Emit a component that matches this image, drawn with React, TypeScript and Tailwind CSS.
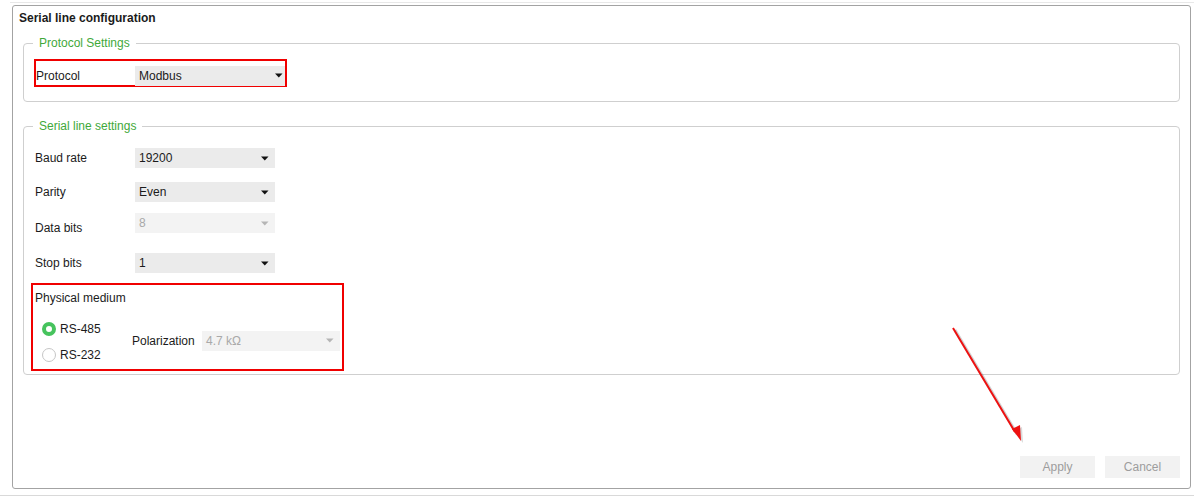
import type { ReactNode } from "react";

function Caret({ disabled }: { disabled?: boolean }) {
  return (
    <svg width="8" height="5" viewBox="0 0 8 5" className="shrink-0">
      <path d="M0 0.5 L7.5 0.5 L3.75 4.5 Z" fill={disabled ? "#b5b5b5" : "#111"} />
    </svg>
  );
}

function Select({
  value,
  width,
  disabled,
  pr = "pr-[6px]",
}: {
  value: string;
  width: string;
  disabled?: boolean;
  pr?: string;
}) {
  return (
    <div
      className={`${width} ${pr} h-[20px] pl-[4px] flex items-center justify-between ${
        disabled ? "bg-[#f3f3f3] text-[#a9a9a9]" : "bg-[#ebebeb] text-[#1b1b1b]"
      }`}
    >
      <span>{value}</span>
      <Caret disabled={disabled} />
    </div>
  );
}

function Group({ title, className, children }: { title: string; className?: string; children: ReactNode }) {
  return (
    <fieldset className={`mx-[10px] border border-[#cfcfcf] rounded-[4px] ${className ?? ""}`}>
      <legend className="ml-[9px] px-[6px] leading-[16px] text-[#3fa93a]">{title}</legend>
      {children}
    </fieldset>
  );
}

function Row({ label, value, disabled, className }: { label: string; value: string; disabled?: boolean; className?: string }) {
  return (
    <div className={`ml-[11px] flex items-center ${className ?? ""}`}>
      <span className="w-[100px] text-[#1b1b1b]">{label}</span>
      <Select value={value} width="w-[140px]" disabled={disabled} />
    </div>
  );
}

function Radio({ label, checked }: { label: string; checked?: boolean }) {
  return (
    <div className="flex items-center h-[16px] gap-[4px]">
      {checked ? (
        <span className="w-[14px] h-[14px] rounded-full border-[4px] border-[#46c35d] bg-white" />
      ) : (
        <span className="w-[14px] h-[14px] rounded-full border border-[#c6c6c6] bg-white" />
      )}
      <span className="text-[#1b1b1b]">{label}</span>
    </div>
  );
}

export default function App() {
  return (
    <div className="relative w-[1194px] h-[497px] bg-white overflow-hidden text-[12px] leading-[16px] font-['Liberation_Sans',Arial,sans-serif]">
      <div className="mt-[2px] ml-[10px] h-px bg-[#e8e8e8]" />
      <div className="mt-[2px] ml-[12px] w-[1179px] h-[484px] border border-[#a3a3a3] rounded-[3px] flex flex-col">
        <h1 className="pt-[4px] pl-[6px] font-bold text-[#1b1b1b]">Serial line configuration</h1>

        <Group title="Protocol Settings" className="mt-[9px] pb-[14px]">
          <div className="mt-[8px] ml-[10px] w-[253px] h-[28px] border-2 border-[#f00000] pt-[5px] flex items-center">
            <span className="w-[99px] text-[#1b1b1b]">Protocol</span>
            <Select value="Modbus" width="w-[150px]" pr="pr-[2px]" />
          </div>
        </Group>

        <Group title="Serial line settings" className="mt-[16px] pb-[3px]">
          <Row label="Baud rate" value="19200" className="mt-[14px]" />
          <Row label="Parity" value="Even" className="mt-[14px]" />
          <div className="ml-[11px] mt-[11px] flex items-start">
            <span className="w-[100px] mt-[7px] text-[#1b1b1b]">Data bits</span>
            <Select value="8" width="w-[140px]" disabled />
          </div>
          <Row label="Stop bits" value="1" className="mt-[17px]" />

          <div className="mt-[10px] ml-[7px] w-[313px] border-2 border-[#f00000] pt-[5px] pb-[6px]">
            <div className="pl-[2px] text-[#1b1b1b]">Physical medium</div>
            <div className="mt-[15px] flex">
              <div className="w-[99px] pl-[9px] flex flex-col gap-[10px]">
                <Radio label="RS-485" checked />
                <Radio label="RS-232" />
              </div>
              <div className="flex items-center pb-[3px]">
                <span className="w-[70px] text-[#1b1b1b]">Polarization</span>
                <Select value="4.7 kΩ" width="w-[138px]" disabled />
              </div>
            </div>
          </div>
        </Group>

        <div className="flex-1" />
        <div className="flex justify-end gap-[10px] pr-[10px] pb-[10px]">
          <button className="w-[75px] h-[22px] bg-[#f2f2f2] text-[#9d9d9d]">Apply</button>
          <button className="w-[75px] h-[22px] bg-[#f2f2f2] text-[#9d9d9d]">Cancel</button>
        </div>
      </div>
      <div className="h-px mt-[6px] bg-[#d9d9d9]" />

      <svg className="absolute inset-0 pointer-events-none" width="1194" height="497">
        <line x1="955" y1="330" x2="1017" y2="434" stroke="#000" strokeOpacity="0.18" strokeWidth="3" />
        <path d="M1023 443 L1014 431 L1022 427 Z" fill="#000" fillOpacity="0.15" />
        <line x1="953" y1="328" x2="1015" y2="432" stroke="#ee1111" strokeWidth="2" />
        <path d="M1021 441 L1012 429 L1020 425 Z" fill="#ee1111" />
      </svg>
    </div>
  );
}
